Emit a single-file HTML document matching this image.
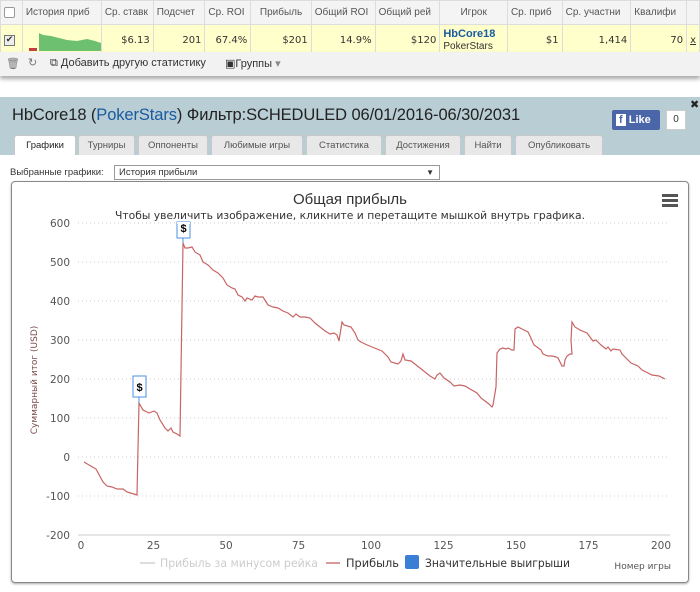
<!DOCTYPE html>
<html><head><meta charset="utf-8"><style>
*{box-sizing:border-box;margin:0;padding:0}
body{width:700px;height:592px;overflow:hidden;background:#fff;font-family:"Liberation Sans","DejaVu Sans",sans-serif;font-size:11px;color:#333;position:relative}
.abs{position:absolute}
table{border-collapse:collapse;position:absolute;left:0;top:0;width:700px}
td{border:1px solid #ddd;height:25px;padding:0 3px;white-space:nowrap;overflow:hidden;font-size:10.5px}
.hd td{height:24px;background:#f4f4f4;color:#555;font-size:10px}
.rw td{background:#ffffcc;height:27px;text-align:right;font-family:"DejaVu Sans",sans-serif;font-size:10px}
.tool{left:0;top:52px;width:700px;height:24px;background:#f2f2f2;box-shadow:0 3px 4px #aaa}
.panel{left:0;top:97px;width:700px;height:58px;background:#b9cdd5}
.tab{position:absolute;top:135px;height:20px;background:#e8e8e8;border:1px solid #c8c8c8;border-bottom:none;font-size:9.5px;color:#555;text-align:center;line-height:19px;border-radius:3px 3px 0 0}
</style></head><body>
<table>
<tr class="hd"><td style="width:22px"><div style="width:11px;height:11px;border:1px solid #999;background:#fff;border-radius:2px"></div></td><td style="width:78px">История приб</td><td style="width:52px">Ср. ставк</td><td style="width:52px">Подсчет</td><td style="width:46px">Ср. ROI</td><td style="width:61px;text-align:center">Прибыль</td><td style="width:64px">Общий ROI</td><td style="width:65px">Общий рей</td><td style="width:68px;text-align:center">Игрок</td><td style="width:55px">Ср. приб</td><td style="width:69px">Ср. участни</td><td style="width:56px">Квалифи</td><td></td></tr>
<tr class="rw"><td style="text-align:left"><div style="width:11px;height:11px;border:1px solid #777;background:#eee;font-size:9px;line-height:9px;text-align:center">✔</div></td><td style="text-align:left;padding:0"><svg width="78" height="27"><polygon points="16,26 16,8 20,10 28,11 36,13 44,15 54,16 64,14 72,16 78,18 78,26" fill="#6cc070"/><rect x="6" y="23" width="8" height="3" fill="#c04040"/></svg></td><td>$6.13</td><td>201</td><td>67.4%</td><td>$201</td><td>14.9%</td><td>$120</td><td style="text-align:left;line-height:12px;font-family:'Liberation Sans',sans-serif"><b style="color:#1a5aa0;font-size:11px">HbCore18</b><br>PokerStars</td><td>$1</td><td>1,414</td><td>70</td><td style="text-align:left;text-decoration:underline">x</td></tr>
</table>
<div class="abs tool"><span class="abs" style="left:6px;top:5px;color:#777">🗑</span><span class="abs" style="left:28px;top:4px;color:#777">↻</span><span class="abs" style="left:50px;top:5px;font-size:11px;color:#333">⧉ Добавить другую статистику</span><span class="abs" style="left:225px;top:5px;color:#333">▣Группы <span style="color:#888">▾</span></span></div>
<div class="abs panel"></div>
<div class="abs" style="left:12px;top:106px;font-size:16.5px;color:#222;font-family:'Liberation Sans',sans-serif;letter-spacing:-0.1px">HbCore18 (<span style="color:#1a5aa0">PokerStars</span>) Фильтр:SCHEDULED 06/01/2016-06/30/2031</div>
<div class="abs" style="left:612px;top:110px;width:48px;height:20px;background:#4a66a8;border-radius:2px;color:#fff;font-weight:bold;font-size:11px;line-height:20px;padding-left:4px"><span style="background:#fff;color:#4a66a8;padding:0 3px">f</span> Like</div>
<div class="abs" style="left:666px;top:110px;width:20px;height:20px;background:#fff;border:1px solid #ccc;text-align:center;line-height:18px;font-size:10px">0</div>
<div class="abs" style="left:690px;top:98px;font-size:11px;font-weight:bold;color:#222">✖</div>
<div class="tab" style="left:14px;width:62px;background:#fff;color:#222">Графики</div>
<div class="tab" style="left:78px;width:57px">Турниры</div>
<div class="tab" style="left:138px;width:70px">Оппоненты</div>
<div class="tab" style="left:211px;width:92px">Любимые игры</div>
<div class="tab" style="left:306px;width:76px">Статистика</div>
<div class="tab" style="left:385px;width:76px">Достижения</div>
<div class="tab" style="left:464px;width:48px">Найти</div>
<div class="tab" style="left:515px;width:88px">Опубликовать</div>
<div class="abs" style="left:10px;top:167px;font-size:9.5px;color:#333">Выбранные графики:</div>
<div class="abs" style="left:114px;top:165px;width:326px;height:15px;border:1px solid #999;font-size:9.5px;padding-left:4px;line-height:13px">История прибыли<span class="abs" style="right:5px;top:0;font-size:8px">▼</span></div>
<div class="abs" style="left:11px;top:181px;width:678px;height:402px;border:1px solid #888;border-radius:4px;box-shadow:0 1px 2px #aaa"></div>
<svg class="abs" style="left:0;top:0" width="700" height="592">
<text x="350" y="204" text-anchor="middle" font-size="15" fill="#333" font-family="Liberation Sans, sans-serif">Общая прибыль</text>
<text x="350" y="219" text-anchor="middle" font-size="11" fill="#333" font-family="DejaVu Sans, sans-serif" textLength="470" lengthAdjust="spacingAndGlyphs">Чтобы увеличить изображение, кликните и перетащите мышкой внутрь графика.</text>
<g fill="#555"><rect x="662" y="194" width="16" height="3"/><rect x="662" y="199" width="16" height="3"/><rect x="662" y="204" width="16" height="3"/></g>
<g stroke="#ccc" stroke-dasharray="1,3"><line x1="78" x2="668" y1="223" y2="223"/><line x1="78" x2="668" y1="262" y2="262"/><line x1="78" x2="668" y1="301" y2="301"/><line x1="78" x2="668" y1="340" y2="340"/><line x1="78" x2="668" y1="379" y2="379"/><line x1="78" x2="668" y1="418" y2="418"/><line x1="78" x2="668" y1="457" y2="457"/><line x1="78" x2="668" y1="496" y2="496"/></g>
<line x1="78" x2="670" y1="535" y2="535" stroke="#ccc"/>
<g font-size="10.5" fill="#555" text-anchor="end" font-family="DejaVu Sans, sans-serif"><text x="70" y="227">600</text><text x="70" y="266">500</text><text x="70" y="305">400</text><text x="70" y="344">300</text><text x="70" y="383">200</text><text x="70" y="422">100</text><text x="70" y="461">0</text><text x="70" y="500">-100</text><text x="70" y="539">-200</text></g>
<g font-size="10.5" fill="#555" text-anchor="middle" font-family="DejaVu Sans, sans-serif"><text x="81" y="549">0</text><text x="153.5" y="549">25</text><text x="226" y="549">50</text><text x="298.5" y="549">75</text><text x="371" y="549">100</text><text x="443.5" y="549">125</text><text x="516" y="549">150</text><text x="588.5" y="549">175</text><text x="661" y="549">200</text></g>
<text transform="translate(37,380) rotate(-90)" text-anchor="middle" font-size="9" fill="#7a4a4a" font-family="DejaVu Sans, sans-serif">Суммарный итог (USD)</text>
<polyline fill="none" stroke="#c86464" stroke-width="1.2" points="84,462 89,465 96,469 103,482 107,486 112,487 117,489 123,489 127,492 134,494 137,495 139,403 143,410 149,413 154,411 157,413 160,420 165,428 168,431 171,428 173,432 177,434 180,436 183,243 185,248 188,248 192,247 195,252 200,255 203,262 208,265 213,270 218,273 223,278 227,285 232,288 235,289 238,295 242,297 245,301 247,298 252,300 255,296 258,297 263,297 268,305 273,307 278,308 283,311 288,313 293,317 296,314 300,317 305,317 310,318 315,323 320,327 325,331 330,334 334,333 337,335 339,341 342,322 344,325 351,327 355,333 358,340 361,342 365,344 372,347 382,351 388,357 391,362 398,364 401,361 403,354 405,360 411,361 420,368 430,376 435,379 437,375 440,373 444,378 450,382 454,386 460,385 465,386 470,389 477,393 481,398 485,401 489,404 492,407 493,405 496,387 497,353 500,349 503,348 506,349 508,348 512,350 514,350 515,329 518,327 522,329 528,332 530,336 534,345 537,347 541,350 543,354 548,356 552,356 556,357 558,358 562,366 564,366 565,360 567,356 570,354 572,354 571,340 572,322 575,327 580,330 587,333 590,337 593,341 596,340 601,345 606,349 608,347 611,351 613,349 620,350 622,354 626,358 631,363 638,366 642,370 646,372 652,375 659,376 665,379"/>
<line x1="139" y1="397" x2="139" y2="403" stroke="#4a90e2"/><rect x="133" y="376" width="13" height="21" fill="#fff" stroke="#4a90e2"/><text x="139.5" y="391" text-anchor="middle" font-size="11" font-weight="bold" fill="#000">$</text>
<line x1="183" y1="238" x2="183" y2="243" stroke="#4a90e2"/><rect x="177" y="222" width="13" height="16" fill="#fff" stroke="#4a90e2"/><text x="183.5" y="232" text-anchor="middle" font-size="11" font-weight="bold" fill="#000">$</text>
<rect x="177" y="222" width="13" height="2" fill="#fff"/>
<line x1="140" x2="155" y1="563" y2="563" stroke="#ddd" stroke-width="2"/><text x="160" y="567" font-size="11.5" fill="#ccc" font-family="DejaVu Sans, sans-serif" textLength="158" lengthAdjust="spacingAndGlyphs">Прибыль за минусом рейка</text>
<line x1="326" x2="340" y1="563" y2="563" stroke="#d89a9a" stroke-width="2"/><text x="346" y="567" font-size="11.5" fill="#333" font-family="DejaVu Sans, sans-serif" textLength="53" lengthAdjust="spacingAndGlyphs">Прибыль</text>
<rect x="405" y="555" width="14" height="14" rx="2" fill="#3a7fd5"/><text x="425" y="567" font-size="11.5" fill="#333" font-family="DejaVu Sans, sans-serif" textLength="145" lengthAdjust="spacingAndGlyphs">Значительные выигрыши</text>
<text x="671" y="569" text-anchor="end" font-size="9" fill="#555" font-family="DejaVu Sans, sans-serif">Номер игры</text>
</svg>
</body></html>
